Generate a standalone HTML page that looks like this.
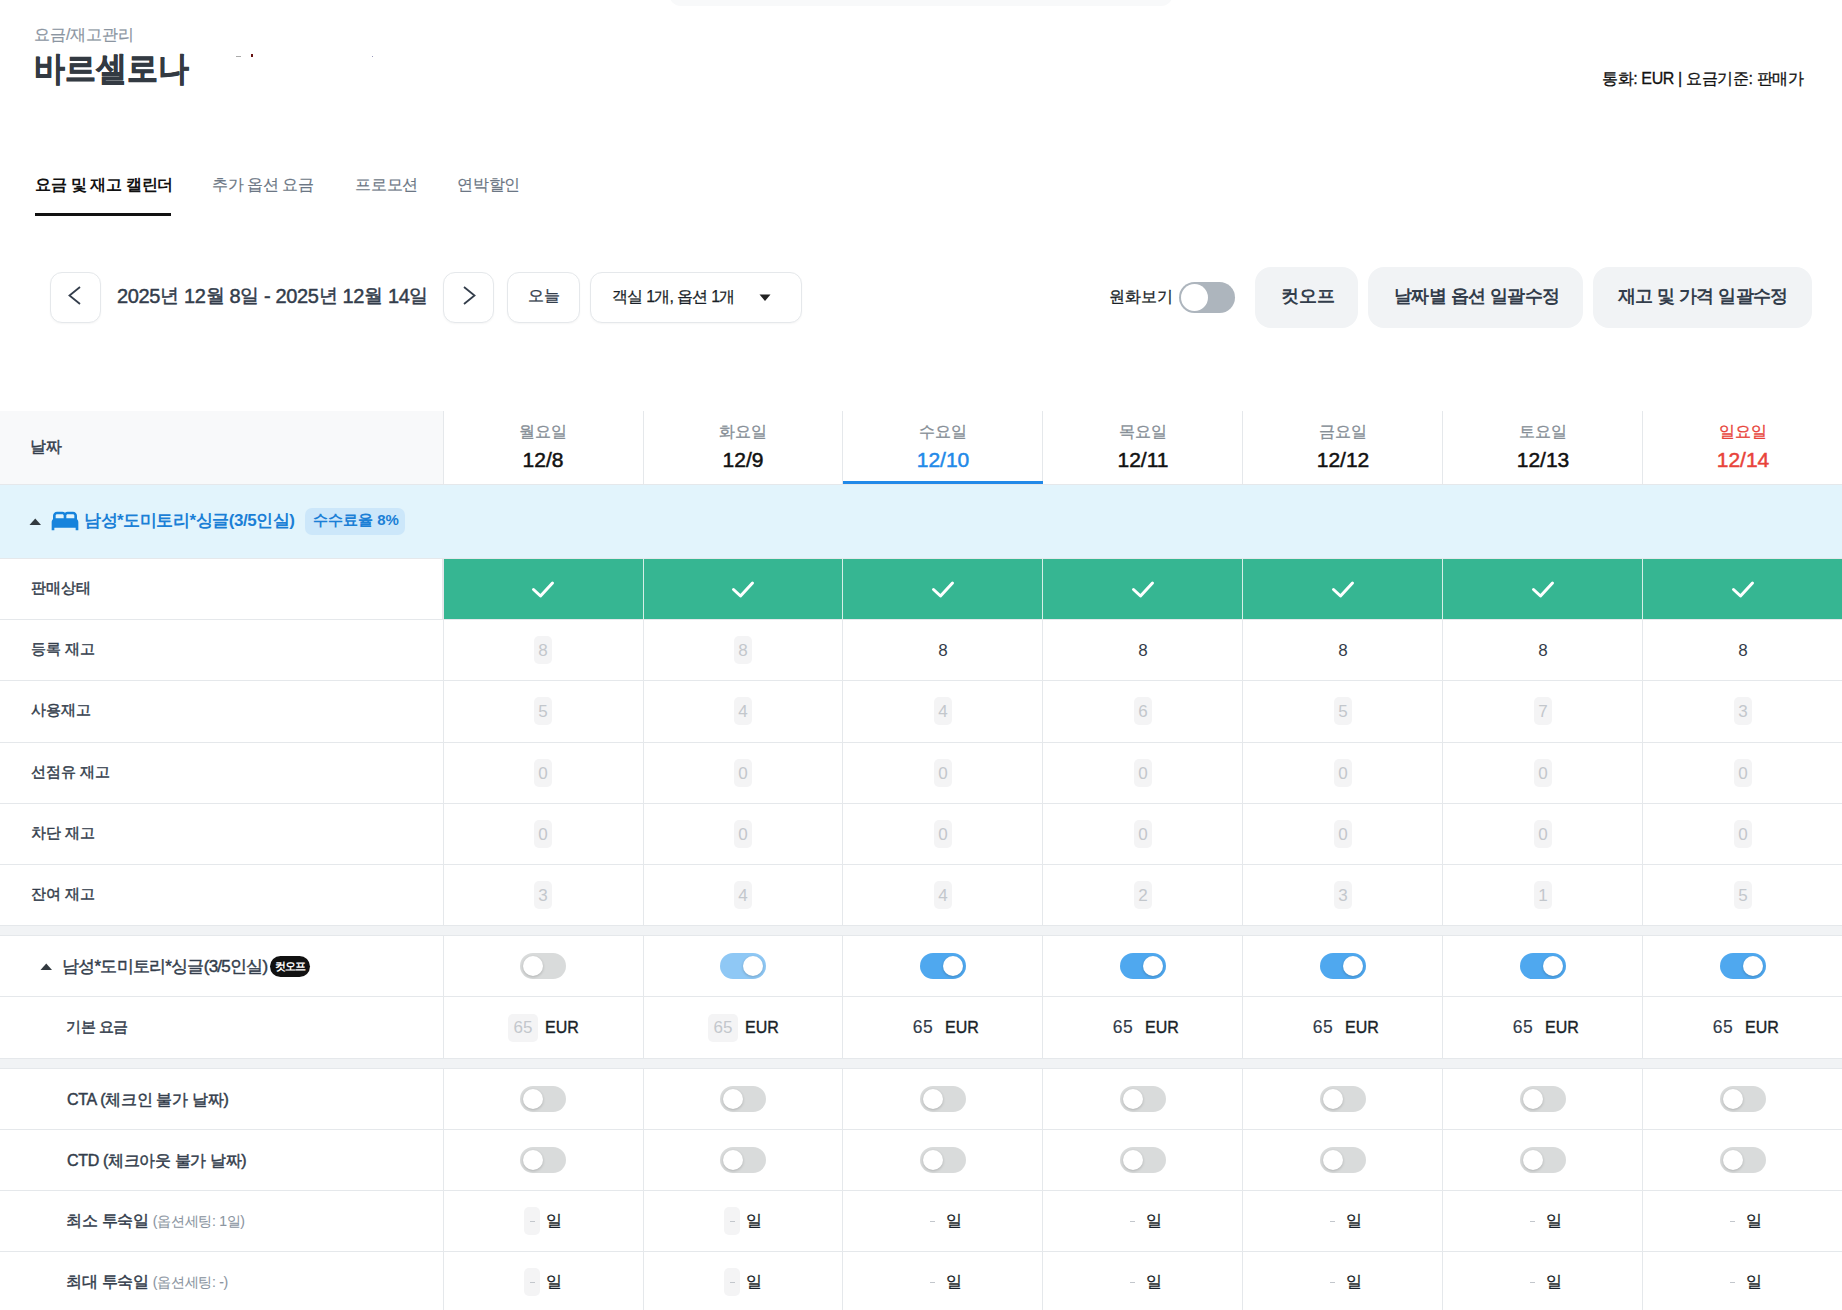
<!DOCTYPE html>
<html lang="ko"><head><meta charset="utf-8"><title>요금 및 재고 캘린더</title><style>
*{box-sizing:border-box;margin:0;padding:0}
html,body{width:1842px;height:1310px;overflow:hidden;background:#fff}
body{position:relative;font-family:"Liberation Sans",sans-serif;color:#191f28}
.a{position:absolute}
.t{position:absolute;white-space:nowrap;line-height:1}
.hl{position:absolute;height:1px;background:#e5e8eb}
.vl{position:absolute;width:1px;background:#e5e8eb}
.btnb{position:absolute;border:1px solid #e5e8eb;border-radius:12px;background:#fff;box-shadow:0 1px 2px rgba(0,0,0,0.04)}
.gbtn{position:absolute;background:#f1f3f5;border-radius:16px}
.nb{position:absolute;background:#f4f4f5;border-radius:5px}
.num{position:absolute;white-space:nowrap;line-height:1;font-size:17px;color:#c3c7cc;text-align:center}
.tg{position:absolute;width:46px;height:26px;border-radius:13px;background:#d9dbdb}
.tg i{position:absolute;top:3px;left:3px;width:20px;height:20px;border-radius:50%;background:#fff;box-shadow:0 1px 3px rgba(0,0,0,0.2)}
.k{font-size:19px;position:relative;top:-1px}
.tg.on{background:#4fa8ef}
.tg.on i{left:23px}
.tg.lt{background:#8fc8f5}
.tg.lt i{left:23px}
</style></head><body>
<div class="a" style="left:669px;top:-20px;width:504px;height:26px;background:#f8f9fa;border-radius:12px"></div>
<div class="t" id="bc" style="left:34px;top:27px;font-size:16px;-webkit-text-stroke-width:0.2px;color:#8b95a1">요금/재고관리</div>
<div class="t" id="ttl" style="left:34px;top:52px;font-size:31px;font-weight:700;-webkit-text-stroke-width:0.6px;color:#333a42;transform:scaleY(1.1);transform-origin:0 2px">바르셀로나</div>
<div class="a" style="left:236px;top:56px;width:5px;height:1px;background:#aaa"></div>
<div class="a" style="left:251px;top:54px;width:2px;height:3px;background:#611"></div>
<div class="a" style="left:372px;top:56px;width:1px;height:1px;background:#99b"></div>
<div class="t" id="cur" style="left:1602px;top:71px;font-size:16px;letter-spacing:-0.38px;-webkit-text-stroke-width:0.3px;color:#111">통화: EUR | 요금기준: 판매가</div>
<div class="t" id="tab1" style="left:35px;top:177px;font-size:16px;letter-spacing:-0.3px;font-weight:700;color:#111">요금 및 재고 캘린더</div>
<div class="a" style="left:35px;top:213px;width:136px;height:3px;background:#111"></div>
<div class="t" id="tab2" style="left:212px;top:177px;font-size:16px;letter-spacing:-0.4px;-webkit-text-stroke-width:0.15px;color:#6b7684">추가 옵션 요금</div>
<div class="t" id="tab3" style="left:355px;top:177px;font-size:16px;letter-spacing:-0.2px;-webkit-text-stroke-width:0.15px;color:#6b7684">프로모션</div>
<div class="t" id="tab4" style="left:457px;top:177px;font-size:16px;letter-spacing:-0.2px;-webkit-text-stroke-width:0.15px;color:#6b7684">연박할인</div>
<div class="btnb" style="left:50px;top:272px;width:51px;height:51px"></div>
<svg class="a" style="left:50px;top:272px" width="51" height="51"><polyline points="80,287 69.5,295.5 80,304" transform="translate(-50,-272)" fill="none" stroke="#333d4b" stroke-width="1.8"/></svg>
<div class="t" id="date" style="left:117px;top:286px;font-size:20px;letter-spacing:-0.35px;-webkit-text-stroke-width:0.45px;color:#333d4b">2025<span class=k>년</span> 12<span class=k>월</span> 8<span class=k>일</span> - 2025<span class=k>년</span> 12<span class=k>월</span> 14<span class=k>일</span></div>
<div class="btnb" style="left:443px;top:272px;width:51px;height:51px"></div>
<svg class="a" style="left:443px;top:272px" width="51" height="51"><polyline points="464,287 474.5,295.5 464,304" transform="translate(-443,-272)" fill="none" stroke="#333d4b" stroke-width="1.8"/></svg>
<div class="btnb" style="left:507px;top:272px;width:73px;height:51px"></div>
<div class="t" id="today" style="left:528px;top:288px;font-size:16px;-webkit-text-stroke-width:0.3px;color:#333d4b">오늘</div>
<div class="btnb" style="left:590px;top:272px;width:212px;height:51px"></div>
<div class="t" id="dd" style="left:612px;top:289px;font-size:16px;letter-spacing:-0.75px;-webkit-text-stroke-width:0.25px;color:#191f28">객실 1개, 옵션 1개</div>
<svg class="a" style="left:759px;top:294px" width="13" height="8"><polygon points="0.5,0.5 11.5,0.5 6,7" fill="#222"/></svg>
<div class="t" id="won" style="left:1109px;top:289px;font-size:16px;-webkit-text-stroke-width:0.3px;color:#191f28">원화보기</div>
<div class="a" style="left:1179px;top:282px;width:56px;height:31px;border-radius:16px;background:#adb5bd"><div class="a" style="left:2px;top:2px;width:27px;height:27px;border-radius:50%;background:#fff"></div></div>
<div class="gbtn" style="left:1255px;top:267px;width:103px;height:61px"></div>
<div class="t" id="b1" style="left:1281px;top:287px;font-size:18px;font-weight:700;color:#333d4b">컷오프</div>
<div class="gbtn" style="left:1368px;top:267px;width:215px;height:61px"></div>
<div class="t" id="b2" style="left:1394px;top:287px;font-size:18px;letter-spacing:-0.6px;font-weight:700;color:#333d4b">날짜별 옵션 일괄수정</div>
<div class="gbtn" style="left:1593px;top:267px;width:219px;height:61px"></div>
<div class="t" id="b3" style="left:1618px;top:287px;font-size:18px;letter-spacing:-0.6px;font-weight:700;color:#333d4b">재고 및 가격 일괄수정</div>
<div class="a" style="left:0;top:411px;width:443px;height:73px;background:#f8f9fa"></div>
<div class="t" id="hdr" style="left:29.5px;top:439px;font-size:16px;-webkit-text-stroke-width:0.45px;color:#333d4b">날짜</div>
<div class="t" style="left:443px;width:200px;text-align:center;top:424px;font-size:16px;-webkit-text-stroke-width:0.3px;color:#868e96">월요일</div>
<div class="t" style="left:443px;width:200px;text-align:center;top:449px;font-size:21px;-webkit-text-stroke-width:0.5px;color:#111">12/8</div>
<div class="t" style="left:643px;width:200px;text-align:center;top:424px;font-size:16px;-webkit-text-stroke-width:0.3px;color:#868e96">화요일</div>
<div class="t" style="left:643px;width:200px;text-align:center;top:449px;font-size:21px;-webkit-text-stroke-width:0.5px;color:#111">12/9</div>
<div class="t" style="left:843px;width:200px;text-align:center;top:424px;font-size:16px;-webkit-text-stroke-width:0.3px;color:#868e96">수요일</div>
<div class="t" style="left:843px;width:200px;text-align:center;top:449px;font-size:21px;-webkit-text-stroke-width:0.5px;color:#2289e8">12/10</div>
<div class="t" style="left:1043px;width:200px;text-align:center;top:424px;font-size:16px;-webkit-text-stroke-width:0.3px;color:#868e96">목요일</div>
<div class="t" style="left:1043px;width:200px;text-align:center;top:449px;font-size:21px;-webkit-text-stroke-width:0.5px;color:#111">12/11</div>
<div class="t" style="left:1243px;width:200px;text-align:center;top:424px;font-size:16px;-webkit-text-stroke-width:0.3px;color:#868e96">금요일</div>
<div class="t" style="left:1243px;width:200px;text-align:center;top:449px;font-size:21px;-webkit-text-stroke-width:0.5px;color:#111">12/12</div>
<div class="t" style="left:1443px;width:200px;text-align:center;top:424px;font-size:16px;-webkit-text-stroke-width:0.3px;color:#868e96">토요일</div>
<div class="t" style="left:1443px;width:200px;text-align:center;top:449px;font-size:21px;-webkit-text-stroke-width:0.5px;color:#111">12/13</div>
<div class="t" style="left:1643px;width:200px;text-align:center;top:424px;font-size:16px;-webkit-text-stroke-width:0.3px;color:#e8433a">일요일</div>
<div class="t" style="left:1643px;width:200px;text-align:center;top:449px;font-size:21px;-webkit-text-stroke-width:0.5px;color:#e8433a">12/14</div>
<div class="a" style="left:843px;top:481px;width:200px;height:3px;background:#2289e8"></div>
<div class="a" style="left:0;top:485px;width:1842px;height:73px;background:#e2f4fc"></div>
<svg class="a" style="left:29px;top:518px" width="13" height="8"><polygon points="0.5,7 12,7 6.25,0.5" fill="#333a40"/></svg>
<svg class="a" style="left:49px;top:505px" width="32" height="32" viewBox="0 0 24 24"><path fill="#1683dc" d="M21 10.78V8c0-1.65-1.35-3-3-3h-4c-.77 0-1.47.3-2 .78-.53-.48-1.23-.78-2-.78H6C4.35 5 3 6.35 3 8v2.78c-.61.55-1 1.34-1 2.22v6h2v-2h16v2h2v-6c0-.88-.39-1.67-1-2.22zM14 7h4c.55 0 1 .45 1 1v2h-6V8c0-.55.45-1 1-1zM5 8c0-.55.45-1 1-1h4c.55 0 1 .45 1 1v2H5V8z"/></svg>
<div class="t" id="room" style="left:84px;top:512px;font-size:17px;letter-spacing:-0.45px;font-weight:700;color:#1b7fd6">남성*도미토리*싱글(3/5인실)</div>
<div class="a" style="left:305px;top:508px;width:100px;height:27px;border-radius:7px;background:#cce7fa"></div>
<div class="t" id="fee" style="left:313px;top:512px;font-size:15px;font-weight:700;color:#1b7fd6">수수료율 8%</div>
<div class="a" style="left:443px;top:559px;width:1399px;height:60px;background:#36b692"></div>
<svg class="a" style="left:531.0px;top:578px" width="24" height="22"><polyline points="2.5,11.5 9.5,18 21.5,5" fill="none" stroke="#fff" stroke-width="3" stroke-linecap="round" stroke-linejoin="round"/></svg>
<svg class="a" style="left:731.0px;top:578px" width="24" height="22"><polyline points="2.5,11.5 9.5,18 21.5,5" fill="none" stroke="#fff" stroke-width="3" stroke-linecap="round" stroke-linejoin="round"/></svg>
<svg class="a" style="left:931.0px;top:578px" width="24" height="22"><polyline points="2.5,11.5 9.5,18 21.5,5" fill="none" stroke="#fff" stroke-width="3" stroke-linecap="round" stroke-linejoin="round"/></svg>
<svg class="a" style="left:1131.0px;top:578px" width="24" height="22"><polyline points="2.5,11.5 9.5,18 21.5,5" fill="none" stroke="#fff" stroke-width="3" stroke-linecap="round" stroke-linejoin="round"/></svg>
<svg class="a" style="left:1331.0px;top:578px" width="24" height="22"><polyline points="2.5,11.5 9.5,18 21.5,5" fill="none" stroke="#fff" stroke-width="3" stroke-linecap="round" stroke-linejoin="round"/></svg>
<svg class="a" style="left:1531.0px;top:578px" width="24" height="22"><polyline points="2.5,11.5 9.5,18 21.5,5" fill="none" stroke="#fff" stroke-width="3" stroke-linecap="round" stroke-linejoin="round"/></svg>
<svg class="a" style="left:1731.0px;top:578px" width="24" height="22"><polyline points="2.5,11.5 9.5,18 21.5,5" fill="none" stroke="#fff" stroke-width="3" stroke-linecap="round" stroke-linejoin="round"/></svg>
<div class="t" style="left:31px;top:580px;font-size:15px;-webkit-text-stroke-width:0.45px;color:#333d4b">판매상태</div>
<div class="t" style="left:31px;top:641px;font-size:15px;-webkit-text-stroke-width:0.45px;color:#333d4b">등록 재고</div>
<div class="t" style="left:31px;top:702px;font-size:15px;-webkit-text-stroke-width:0.45px;color:#333d4b">사용재고</div>
<div class="t" style="left:31px;top:764px;font-size:15px;-webkit-text-stroke-width:0.45px;color:#333d4b">선점유 재고</div>
<div class="t" style="left:31px;top:825px;font-size:15px;-webkit-text-stroke-width:0.45px;color:#333d4b">차단 재고</div>
<div class="t" style="left:31px;top:886px;font-size:15px;-webkit-text-stroke-width:0.45px;color:#333d4b">잔여 재고</div>
<div class="nb" style="left:534.0px;top:636px;width:18px;height:28px"></div>
<div class="num" style="left:528.0px;width:30px;top:642px">8</div>
<div class="nb" style="left:734.0px;top:636px;width:18px;height:28px"></div>
<div class="num" style="left:728.0px;width:30px;top:642px">8</div>
<div class="t" style="left:928.0px;width:30px;text-align:center;top:642px;font-size:17px;color:#333d4b">8</div>
<div class="t" style="left:1128.0px;width:30px;text-align:center;top:642px;font-size:17px;color:#333d4b">8</div>
<div class="t" style="left:1328.0px;width:30px;text-align:center;top:642px;font-size:17px;color:#333d4b">8</div>
<div class="t" style="left:1528.0px;width:30px;text-align:center;top:642px;font-size:17px;color:#333d4b">8</div>
<div class="t" style="left:1728.0px;width:30px;text-align:center;top:642px;font-size:17px;color:#333d4b">8</div>
<div class="nb" style="left:534.0px;top:697px;width:18px;height:28px"></div>
<div class="num" style="left:528.0px;width:30px;top:703px">5</div>
<div class="nb" style="left:734.0px;top:697px;width:18px;height:28px"></div>
<div class="num" style="left:728.0px;width:30px;top:703px">4</div>
<div class="nb" style="left:934.0px;top:697px;width:18px;height:28px"></div>
<div class="num" style="left:928.0px;width:30px;top:703px">4</div>
<div class="nb" style="left:1134.0px;top:697px;width:18px;height:28px"></div>
<div class="num" style="left:1128.0px;width:30px;top:703px">6</div>
<div class="nb" style="left:1334.0px;top:697px;width:18px;height:28px"></div>
<div class="num" style="left:1328.0px;width:30px;top:703px">5</div>
<div class="nb" style="left:1534.0px;top:697px;width:18px;height:28px"></div>
<div class="num" style="left:1528.0px;width:30px;top:703px">7</div>
<div class="nb" style="left:1734.0px;top:697px;width:18px;height:28px"></div>
<div class="num" style="left:1728.0px;width:30px;top:703px">3</div>
<div class="nb" style="left:534.0px;top:759px;width:18px;height:28px"></div>
<div class="num" style="left:528.0px;width:30px;top:765px">0</div>
<div class="nb" style="left:734.0px;top:759px;width:18px;height:28px"></div>
<div class="num" style="left:728.0px;width:30px;top:765px">0</div>
<div class="nb" style="left:934.0px;top:759px;width:18px;height:28px"></div>
<div class="num" style="left:928.0px;width:30px;top:765px">0</div>
<div class="nb" style="left:1134.0px;top:759px;width:18px;height:28px"></div>
<div class="num" style="left:1128.0px;width:30px;top:765px">0</div>
<div class="nb" style="left:1334.0px;top:759px;width:18px;height:28px"></div>
<div class="num" style="left:1328.0px;width:30px;top:765px">0</div>
<div class="nb" style="left:1534.0px;top:759px;width:18px;height:28px"></div>
<div class="num" style="left:1528.0px;width:30px;top:765px">0</div>
<div class="nb" style="left:1734.0px;top:759px;width:18px;height:28px"></div>
<div class="num" style="left:1728.0px;width:30px;top:765px">0</div>
<div class="nb" style="left:534.0px;top:820px;width:18px;height:28px"></div>
<div class="num" style="left:528.0px;width:30px;top:826px">0</div>
<div class="nb" style="left:734.0px;top:820px;width:18px;height:28px"></div>
<div class="num" style="left:728.0px;width:30px;top:826px">0</div>
<div class="nb" style="left:934.0px;top:820px;width:18px;height:28px"></div>
<div class="num" style="left:928.0px;width:30px;top:826px">0</div>
<div class="nb" style="left:1134.0px;top:820px;width:18px;height:28px"></div>
<div class="num" style="left:1128.0px;width:30px;top:826px">0</div>
<div class="nb" style="left:1334.0px;top:820px;width:18px;height:28px"></div>
<div class="num" style="left:1328.0px;width:30px;top:826px">0</div>
<div class="nb" style="left:1534.0px;top:820px;width:18px;height:28px"></div>
<div class="num" style="left:1528.0px;width:30px;top:826px">0</div>
<div class="nb" style="left:1734.0px;top:820px;width:18px;height:28px"></div>
<div class="num" style="left:1728.0px;width:30px;top:826px">0</div>
<div class="nb" style="left:534.0px;top:881px;width:18px;height:28px"></div>
<div class="num" style="left:528.0px;width:30px;top:887px">3</div>
<div class="nb" style="left:734.0px;top:881px;width:18px;height:28px"></div>
<div class="num" style="left:728.0px;width:30px;top:887px">4</div>
<div class="nb" style="left:934.0px;top:881px;width:18px;height:28px"></div>
<div class="num" style="left:928.0px;width:30px;top:887px">4</div>
<div class="nb" style="left:1134.0px;top:881px;width:18px;height:28px"></div>
<div class="num" style="left:1128.0px;width:30px;top:887px">2</div>
<div class="nb" style="left:1334.0px;top:881px;width:18px;height:28px"></div>
<div class="num" style="left:1328.0px;width:30px;top:887px">3</div>
<div class="nb" style="left:1534.0px;top:881px;width:18px;height:28px"></div>
<div class="num" style="left:1528.0px;width:30px;top:887px">1</div>
<div class="nb" style="left:1734.0px;top:881px;width:18px;height:28px"></div>
<div class="num" style="left:1728.0px;width:30px;top:887px">5</div>
<div class="a" style="left:0;top:925px;width:1842px;height:11px;background:#f1f3f5"></div>
<svg class="a" style="left:40px;top:963px" width="13" height="8"><polygon points="0.5,7 12,7 6.25,0.5" fill="#333a40"/></svg>
<div class="t" id="opt" style="left:62px;top:958px;font-size:17px;letter-spacing:-0.75px;-webkit-text-stroke-width:0.45px;color:#333d4b">남성*도미토리*싱글(3/5인실)</div>
<div class="a" style="left:270px;top:956px;width:40px;height:21px;border-radius:11px;background:#111"></div>
<div class="t" style="left:270px;width:40px;text-align:center;top:961px;font-size:11px;font-weight:700;color:#fff;letter-spacing:-1px">컷오프</div>
<div class="tg" style="left:520.0px;top:953px"><i></i></div>
<div class="tg lt" style="left:720.0px;top:953px"><i></i></div>
<div class="tg on" style="left:920.0px;top:953px"><i></i></div>
<div class="tg on" style="left:1120.0px;top:953px"><i></i></div>
<div class="tg on" style="left:1320.0px;top:953px"><i></i></div>
<div class="tg on" style="left:1520.0px;top:953px"><i></i></div>
<div class="tg on" style="left:1720.0px;top:953px"><i></i></div>
<div class="t" id="base" style="left:66px;top:1019px;font-size:15px;letter-spacing:-0.5px;-webkit-text-stroke-width:0.45px;color:#333d4b">기본 요금</div>
<div class="nb" style="left:508.0px;top:1014px;width:30px;height:28px"></div>
<div class="num" style="left:508.0px;width:30px;top:1019px">65</div>
<div class="t" style="left:545.0px;top:1020px;font-size:16px;-webkit-text-stroke-width:0.35px;color:#191f28">EUR</div>
<div class="nb" style="left:708.0px;top:1014px;width:30px;height:28px"></div>
<div class="num" style="left:708.0px;width:30px;top:1019px">65</div>
<div class="t" style="left:745.0px;top:1020px;font-size:16px;-webkit-text-stroke-width:0.35px;color:#191f28">EUR</div>
<div class="t" style="left:908.0px;width:30px;text-align:center;top:1019px;font-size:17.5px;letter-spacing:0.4px;-webkit-text-stroke-width:0.15px;color:#333d4b">65</div>
<div class="t" style="left:945.0px;top:1020px;font-size:16px;-webkit-text-stroke-width:0.35px;color:#191f28">EUR</div>
<div class="t" style="left:1108.0px;width:30px;text-align:center;top:1019px;font-size:17.5px;letter-spacing:0.4px;-webkit-text-stroke-width:0.15px;color:#333d4b">65</div>
<div class="t" style="left:1145.0px;top:1020px;font-size:16px;-webkit-text-stroke-width:0.35px;color:#191f28">EUR</div>
<div class="t" style="left:1308.0px;width:30px;text-align:center;top:1019px;font-size:17.5px;letter-spacing:0.4px;-webkit-text-stroke-width:0.15px;color:#333d4b">65</div>
<div class="t" style="left:1345.0px;top:1020px;font-size:16px;-webkit-text-stroke-width:0.35px;color:#191f28">EUR</div>
<div class="t" style="left:1508.0px;width:30px;text-align:center;top:1019px;font-size:17.5px;letter-spacing:0.4px;-webkit-text-stroke-width:0.15px;color:#333d4b">65</div>
<div class="t" style="left:1545.0px;top:1020px;font-size:16px;-webkit-text-stroke-width:0.35px;color:#191f28">EUR</div>
<div class="t" style="left:1708.0px;width:30px;text-align:center;top:1019px;font-size:17.5px;letter-spacing:0.4px;-webkit-text-stroke-width:0.15px;color:#333d4b">65</div>
<div class="t" style="left:1745.0px;top:1020px;font-size:16px;-webkit-text-stroke-width:0.35px;color:#191f28">EUR</div>
<div class="a" style="left:0;top:1058px;width:1842px;height:11px;background:#f1f3f5"></div>
<div class="t" id="cta" style="left:67px;top:1092px;font-size:16px;letter-spacing:-0.3px;-webkit-text-stroke-width:0.45px;color:#333d4b">CTA (체크인 불가 날짜)</div>
<div class="t" id="ctd" style="left:67px;top:1153px;font-size:16px;letter-spacing:-0.35px;-webkit-text-stroke-width:0.45px;color:#333d4b">CTD (체크아웃 불가 날짜)</div>
<div class="tg" style="left:520.0px;top:1086px"><i></i></div>
<div class="tg" style="left:720.0px;top:1086px"><i></i></div>
<div class="tg" style="left:920.0px;top:1086px"><i></i></div>
<div class="tg" style="left:1120.0px;top:1086px"><i></i></div>
<div class="tg" style="left:1320.0px;top:1086px"><i></i></div>
<div class="tg" style="left:1520.0px;top:1086px"><i></i></div>
<div class="tg" style="left:1720.0px;top:1086px"><i></i></div>
<div class="tg" style="left:520.0px;top:1147px"><i></i></div>
<div class="tg" style="left:720.0px;top:1147px"><i></i></div>
<div class="tg" style="left:920.0px;top:1147px"><i></i></div>
<div class="tg" style="left:1120.0px;top:1147px"><i></i></div>
<div class="tg" style="left:1320.0px;top:1147px"><i></i></div>
<div class="tg" style="left:1520.0px;top:1147px"><i></i></div>
<div class="tg" style="left:1720.0px;top:1147px"><i></i></div>
<div class="t" id="mn" style="left:66px;top:1213px;font-size:16px;letter-spacing:-0.3px;-webkit-text-stroke-width:0.45px;color:#333d4b">최소 투숙일 <span style="font-size:14px;font-weight:400;-webkit-text-stroke-width:0.1px;color:#8b95a1">(옵션세팅: 1일)</span></div>
<div class="t" id="mx" style="left:66px;top:1274px;font-size:16px;letter-spacing:-0.3px;-webkit-text-stroke-width:0.45px;color:#333d4b">최대 투숙일 <span style="font-size:14px;font-weight:400;-webkit-text-stroke-width:0.1px;color:#8b95a1">(옵션세팅: -)</span></div>
<div class="nb" style="left:524.0px;top:1207px;width:16px;height:28px"></div>
<div class="a" style="left:529.5px;top:1221px;width:5px;height:1px;background:#c3c7cc"></div>
<div class="t" style="left:546.0px;top:1213px;font-size:16px;-webkit-text-stroke-width:0.3px;color:#191f28">일</div>
<div class="nb" style="left:724.0px;top:1207px;width:16px;height:28px"></div>
<div class="a" style="left:729.5px;top:1221px;width:5px;height:1px;background:#c3c7cc"></div>
<div class="t" style="left:746.0px;top:1213px;font-size:16px;-webkit-text-stroke-width:0.3px;color:#191f28">일</div>
<div class="a" style="left:929.5px;top:1221px;width:5px;height:1px;background:#c3c7cc"></div>
<div class="t" style="left:946.0px;top:1213px;font-size:16px;-webkit-text-stroke-width:0.3px;color:#191f28">일</div>
<div class="a" style="left:1129.5px;top:1221px;width:5px;height:1px;background:#c3c7cc"></div>
<div class="t" style="left:1146.0px;top:1213px;font-size:16px;-webkit-text-stroke-width:0.3px;color:#191f28">일</div>
<div class="a" style="left:1329.5px;top:1221px;width:5px;height:1px;background:#c3c7cc"></div>
<div class="t" style="left:1346.0px;top:1213px;font-size:16px;-webkit-text-stroke-width:0.3px;color:#191f28">일</div>
<div class="a" style="left:1529.5px;top:1221px;width:5px;height:1px;background:#c3c7cc"></div>
<div class="t" style="left:1546.0px;top:1213px;font-size:16px;-webkit-text-stroke-width:0.3px;color:#191f28">일</div>
<div class="a" style="left:1729.5px;top:1221px;width:5px;height:1px;background:#c3c7cc"></div>
<div class="t" style="left:1746.0px;top:1213px;font-size:16px;-webkit-text-stroke-width:0.3px;color:#191f28">일</div>
<div class="nb" style="left:524.0px;top:1268px;width:16px;height:28px"></div>
<div class="a" style="left:529.5px;top:1282px;width:5px;height:1px;background:#c3c7cc"></div>
<div class="t" style="left:546.0px;top:1274px;font-size:16px;-webkit-text-stroke-width:0.3px;color:#191f28">일</div>
<div class="nb" style="left:724.0px;top:1268px;width:16px;height:28px"></div>
<div class="a" style="left:729.5px;top:1282px;width:5px;height:1px;background:#c3c7cc"></div>
<div class="t" style="left:746.0px;top:1274px;font-size:16px;-webkit-text-stroke-width:0.3px;color:#191f28">일</div>
<div class="a" style="left:929.5px;top:1282px;width:5px;height:1px;background:#c3c7cc"></div>
<div class="t" style="left:946.0px;top:1274px;font-size:16px;-webkit-text-stroke-width:0.3px;color:#191f28">일</div>
<div class="a" style="left:1129.5px;top:1282px;width:5px;height:1px;background:#c3c7cc"></div>
<div class="t" style="left:1146.0px;top:1274px;font-size:16px;-webkit-text-stroke-width:0.3px;color:#191f28">일</div>
<div class="a" style="left:1329.5px;top:1282px;width:5px;height:1px;background:#c3c7cc"></div>
<div class="t" style="left:1346.0px;top:1274px;font-size:16px;-webkit-text-stroke-width:0.3px;color:#191f28">일</div>
<div class="a" style="left:1529.5px;top:1282px;width:5px;height:1px;background:#c3c7cc"></div>
<div class="t" style="left:1546.0px;top:1274px;font-size:16px;-webkit-text-stroke-width:0.3px;color:#191f28">일</div>
<div class="a" style="left:1729.5px;top:1282px;width:5px;height:1px;background:#c3c7cc"></div>
<div class="t" style="left:1746.0px;top:1274px;font-size:16px;-webkit-text-stroke-width:0.3px;color:#191f28">일</div>
<div class="hl" style="left:0;top:558px;width:1842px"></div>
<div class="hl" style="left:0;top:619px;width:1842px"></div>
<div class="hl" style="left:0;top:680px;width:1842px"></div>
<div class="hl" style="left:0;top:742px;width:1842px"></div>
<div class="hl" style="left:0;top:803px;width:1842px"></div>
<div class="hl" style="left:0;top:864px;width:1842px"></div>
<div class="hl" style="left:0;top:925px;width:1842px"></div>
<div class="hl" style="left:0;top:484px;width:1842px"></div>
<div class="hl" style="left:0;top:935px;width:1842px"></div>
<div class="hl" style="left:0;top:996px;width:1842px"></div>
<div class="hl" style="left:0;top:1058px;width:1842px"></div>
<div class="hl" style="left:0;top:1068px;width:1842px"></div>
<div class="hl" style="left:0;top:1129px;width:1842px"></div>
<div class="hl" style="left:0;top:1190px;width:1842px"></div>
<div class="hl" style="left:0;top:1251px;width:1842px"></div>
<div class="vl" style="left:443px;top:411px;height:73px"></div>
<div class="vl" style="left:443px;top:558px;height:367px"></div>
<div class="vl" style="left:443px;top:935px;height:123px"></div>
<div class="vl" style="left:443px;top:1068px;height:242px"></div>
<div class="vl" style="left:643px;top:411px;height:73px"></div>
<div class="vl" style="left:643px;top:558px;height:367px"></div>
<div class="vl" style="left:643px;top:935px;height:123px"></div>
<div class="vl" style="left:643px;top:1068px;height:242px"></div>
<div class="vl" style="left:842px;top:411px;height:73px"></div>
<div class="vl" style="left:842px;top:558px;height:367px"></div>
<div class="vl" style="left:842px;top:935px;height:123px"></div>
<div class="vl" style="left:842px;top:1068px;height:242px"></div>
<div class="vl" style="left:1042px;top:411px;height:73px"></div>
<div class="vl" style="left:1042px;top:558px;height:367px"></div>
<div class="vl" style="left:1042px;top:935px;height:123px"></div>
<div class="vl" style="left:1042px;top:1068px;height:242px"></div>
<div class="vl" style="left:1242px;top:411px;height:73px"></div>
<div class="vl" style="left:1242px;top:558px;height:367px"></div>
<div class="vl" style="left:1242px;top:935px;height:123px"></div>
<div class="vl" style="left:1242px;top:1068px;height:242px"></div>
<div class="vl" style="left:1442px;top:411px;height:73px"></div>
<div class="vl" style="left:1442px;top:558px;height:367px"></div>
<div class="vl" style="left:1442px;top:935px;height:123px"></div>
<div class="vl" style="left:1442px;top:1068px;height:242px"></div>
<div class="vl" style="left:1642px;top:411px;height:73px"></div>
<div class="vl" style="left:1642px;top:558px;height:367px"></div>
<div class="vl" style="left:1642px;top:935px;height:123px"></div>
<div class="vl" style="left:1642px;top:1068px;height:242px"></div>
<div class="a" style="left:643px;top:559px;width:1px;height:60px;background:#d6efe7"></div>
<div class="a" style="left:842px;top:559px;width:1px;height:60px;background:#d6efe7"></div>
<div class="a" style="left:1042px;top:559px;width:1px;height:60px;background:#d6efe7"></div>
<div class="a" style="left:1242px;top:559px;width:1px;height:60px;background:#d6efe7"></div>
<div class="a" style="left:1442px;top:559px;width:1px;height:60px;background:#d6efe7"></div>
<div class="a" style="left:1642px;top:559px;width:1px;height:60px;background:#d6efe7"></div>
<div class="a" style="left:442px;top:559px;width:1px;height:60px;background:#e5e8eb"></div>
<div class="a" style="left:843px;top:481px;width:200px;height:3px;background:#2289e8"></div>
</body></html>
